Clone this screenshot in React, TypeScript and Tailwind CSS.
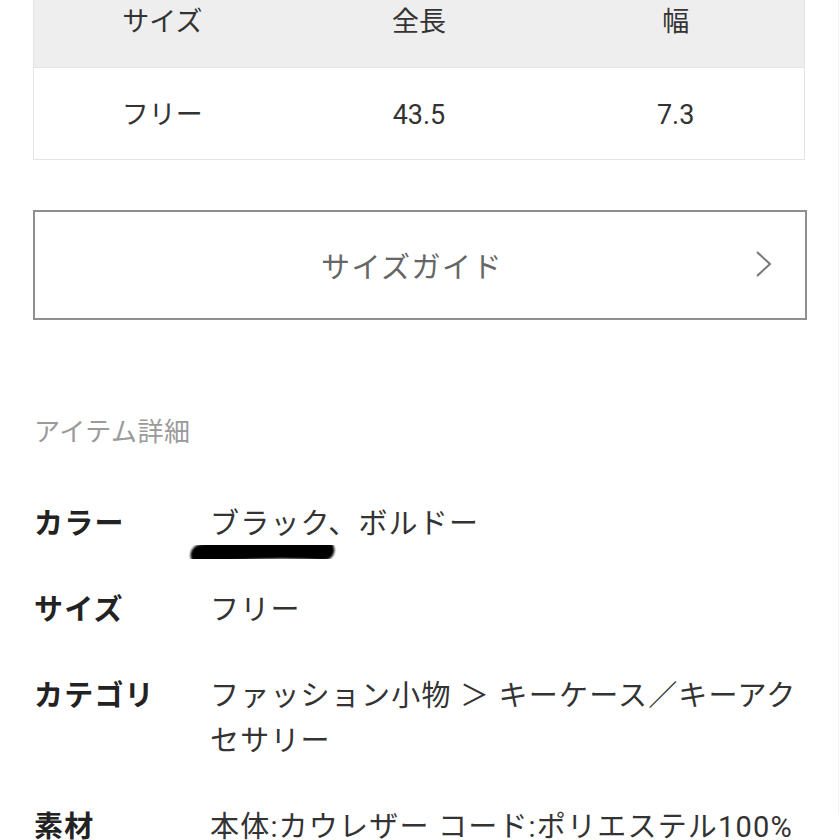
const font = "font-['Roboto','Noto_Sans_CJK_JP',sans-serif]";

const details = [
  { label: "カラー", value: "ブラック、ボルドー", marked: true },
  { label: "サイズ", value: "フリー" },
  { label: "カテゴリ", value: "ファッション小物 ＞ キーケース／キーアクセサリー" },
  { label: "素材", value: "本体:カウレザー コード:ポリエステル100%" },
];

function Marker() {
  return (
    <svg
      className="absolute left-[-22px] top-[28px]"
      width="152"
      height="34"
      viewBox="0 0 152 34"
      aria-hidden="true"
    >
      <defs>
        <filter id="soft" x="-10%" y="-50%" width="120%" height="200%">
          <feGaussianBlur stdDeviation="0.9" />
        </filter>
      </defs>
      <path
        d="M13 20 C 40 13, 100 12, 136 15"
        fill="none"
        stroke="#000"
        strokeWidth="21"
        strokeLinecap="round"
        filter="url(#soft)"
      />
    </svg>
  );
}

export default function App() {
  return (
    <div className={`h-[840px] w-[840px] overflow-hidden bg-white ${font}`}>
      <div className="h-full w-[839px] border-r border-[#f1f1f1]">
        {/* size table */}
        <div className="mx-[33px] -mt-[26px] border border-[#e4e4e4] text-[27px] text-[#333]">
          <div className="grid h-[92px] grid-cols-3 items-center bg-[#eeeeee] pt-[3px] text-center">
            <span>サイズ</span>
            <span>全長</span>
            <span>幅</span>
          </div>
          <div className="grid h-[92px] grid-cols-3 items-center border-t border-[#e4e4e4] pt-[3px] text-center">
            <span>フリー</span>
            <span>43.5</span>
            <span>7.3</span>
          </div>
        </div>

        <button className="relative mx-[33px] mt-[50px] flex h-[110px] w-[774px] items-center justify-center border-2 border-[#8f8f8f] pt-[8px] pr-[16px] text-[29px] tracking-[1.5px] text-[#666]">
          サイズガイド
          <svg
            className="absolute right-[32px] top-[38px]"
            width="18"
            height="28"
            viewBox="0 0 18 28"
            aria-hidden="true"
          >
            <path d="M2 2 L15 14 L2 26" fill="none" stroke="#777" strokeWidth="2" />
          </svg>
        </button>

        <section className="px-[34px]">
          <h2 className="mt-[94px] text-[26px] leading-[36px] tracking-[0.5px] text-[#9a9a9a]">
            アイテム詳細
          </h2>
          <dl className="mt-[52px] space-y-[41px]">
            {details.map((row) => (
              <div
                key={row.label}
                className="grid grid-cols-[178px_1fr] text-[29px] leading-[45px] tracking-[1.2px]"
              >
                <dt className="font-bold text-[#222]">{row.label}</dt>
                <dd className="-ml-[2px] text-[#333]">
                  <span className="relative">
                    {row.value}
                    {row.marked && <Marker />}
                  </span>
                </dd>
              </div>
            ))}
          </dl>
        </section>
      </div>
    </div>
  );
}
